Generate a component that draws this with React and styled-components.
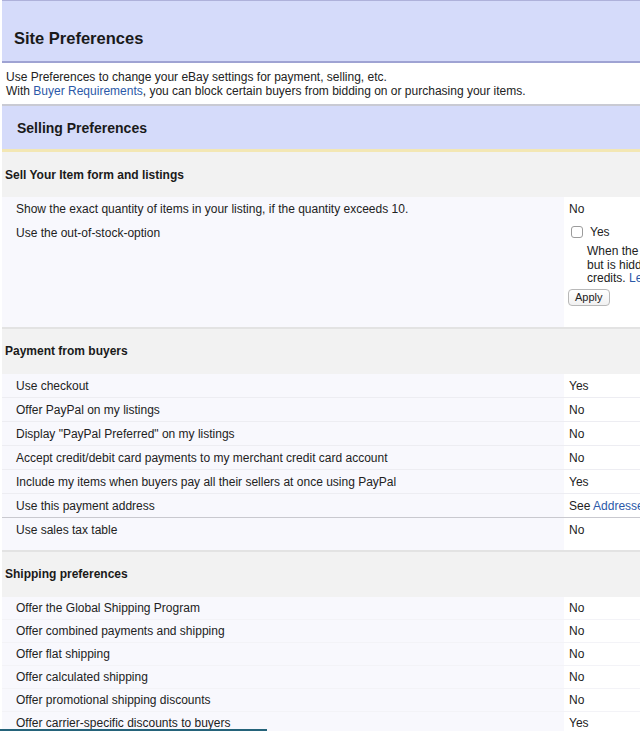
import React from 'react';
import styled, { createGlobalStyle } from 'styled-components';

const GlobalStyle = createGlobalStyle`
  html, body { margin: 0; padding: 0; background: #fff; overflow: hidden; }
  body {
    font-family: "Liberation Sans", Arial, Helvetica, sans-serif;
    color: #222;
    -webkit-font-smoothing: antialiased;
  }
`;

const Page = styled.div`
  width: 900px;
  margin-left: 2px;
`;

const SiteHeader = styled.header`
  background: #d5dbfa;
  border-top: 1px solid #aeb1da;
  border-bottom: 2px solid #9fa3d3;
  padding: 28px 12px 13px;
`;

const Title = styled.h1`
  margin: 0;
  font-size: 16.5px;
  line-height: 19px;
  font-weight: bold;
  color: #1a1a1a;
`;

const Intro = styled.div`
  padding: 7px 4px 6px;
  font-size: 12px;
  line-height: 14px;
  color: #222;
`;

const Link = styled.a`
  color: #2b59a8;
  text-decoration: none;
`;

const SellingBar = styled.div`
  height: 43px;
  display: flex;
  align-items: center;
  padding: 0 15px;
  background: #d5dbfa;
  border-top: 2px solid #c9cad3;
  border-bottom: 3px solid #f3e7b4;
  font-size: 14px;
  font-weight: bold;
  color: #1a1a1a;
`;

const Section = styled.section`
  border-bottom: ${(p) => (p.$last ? 'none' : '2px solid #e3e3e3')};
`;

const SectionHead = styled.div`
  height: 45px;
  display: flex;
  align-items: center;
  padding-left: 3px;
  background: #f2f2f2;
  font-size: 12px;
  font-weight: bold;
  color: #1a1a1a;
`;

const lineColor = {
  strong: '1px solid #c9c9cf',
  faint: '1px solid #ededf2',
  soft: '1px solid #f3f3f7',
  none: 'none',
};

const Row = styled.div`
  display: grid;
  grid-template-columns: 562px 1fr;
  font-size: 12px;
  line-height: 14px;
  border-bottom: ${(p) => lineColor[p.$line] || 'none'};
`;

const Label = styled.div`
  background: #f8f8fd;
  padding: ${(p) => p.$pt}px 0 ${(p) => p.$pb}px 14px;
  color: #222;
`;

const Value = styled.div`
  background: #fff;
  padding: ${(p) => p.$pt}px 5px ${(p) => p.$pb}px;
  color: #222;
  white-space: nowrap;
  overflow: hidden;
`;

const CheckLine = styled.label`
  display: flex;
  align-items: center;
  gap: 7px;
  height: 14px;
`;

const Box = styled.span`
  display: inline-block;
  width: 10px;
  height: 10px;
  margin-left: 2px;
  border: 1px solid #9c9c9c;
  border-radius: 3px;
  background: #fff;
`;

const Help = styled.div`
  margin: 6px 0 0 18px;
  line-height: 13.5px;
`;

const ApplyButton = styled.button`
  display: block;
  margin: 3px 0 0 -1px;
  height: 17px;
  padding: 0 6px;
  font-family: "Liberation Sans", Arial, sans-serif;
  font-size: 11px;
  line-height: 15px;
  color: #222;
  background: linear-gradient(#ffffff, #f1f1f1);
  border: 1px solid #b8b8b8;
  border-radius: 4px;
`;

const ScrollThumb = styled.div`
  position: fixed;
  left: 0;
  bottom: 0;
  width: 267px;
  height: 2px;
  background: #24637a;
`;

const payment = [
  ['Use checkout', 'Yes'],
  ['Offer PayPal on my listings', 'No'],
  ['Display "PayPal Preferred" on my listings', 'No'],
  ['Accept credit/debit card payments to my merchant credit card account', 'No'],
  ['Include my items when buyers pay all their sellers at once using PayPal', 'Yes'],
  ['Use this payment address', 'address'],
  ['Use sales tax table', 'No'],
];

const shipping = [
  ['Offer the Global Shipping Program', 'No'],
  ['Offer combined payments and shipping', 'No'],
  ['Offer flat shipping', 'No'],
  ['Offer calculated shipping', 'No'],
  ['Offer promotional shipping discounts', 'No'],
  ['Offer carrier-specific discounts to buyers', 'Yes'],
];

export default function App() {
  return (
    <>
      <GlobalStyle />
      <Page>
        <SiteHeader>
          <Title>Site Preferences</Title>
        </SiteHeader>
        <Intro>
          Use Preferences to change your eBay settings for payment, selling, etc.
          <br />
          With <Link href="#">Buyer Requirements</Link>, you can block certain buyers from bidding on or purchasing your items.
        </Intro>
        <SellingBar>Selling Preferences</SellingBar>

        <Section>
          <SectionHead>Sell Your Item form and listings</SectionHead>
          <Row $line="none">
            <Label $pt={5} $pb={5}>Show the exact quantity of items in your listing, if the quantity exceeds 10.</Label>
            <Value $pt={5} $pb={5}>No</Value>
          </Row>
          <Row $line="none">
            <Label $pt={5} $pb={21}>Use the out-of-stock-option</Label>
            <Value $pt={4} $pb={21}>
              <CheckLine>
                <Box />
                Yes
              </CheckLine>
              <Help>
                When the quantity of your item is zero, the listing remains active
                <br />
                but is hidden from search results until you update the quantity, saving listing
                <br />
                credits. <Link href="#">Learn more</Link>
              </Help>
              <ApplyButton type="button">Apply</ApplyButton>
            </Value>
          </Row>
        </Section>

        <Section>
          <SectionHead>Payment from buyers</SectionHead>
          {payment.map(([label, value], i) => {
            const last = i === payment.length - 1;
            return (
              <Row key={label} $line={last ? 'none' : i === payment.length - 2 ? 'strong' : 'faint'}>
                <Label $pt={5} $pb={last ? 13 : 4}>{label}</Label>
                <Value $pt={5} $pb={last ? 13 : 4}>
                  {value === 'address' ? (
                    <>
                      See <Link href="#">Addresses</Link>
                    </>
                  ) : (
                    value
                  )}
                </Value>
              </Row>
            );
          })}
        </Section>

        <Section $last>
          <SectionHead>Shipping preferences</SectionHead>
          {shipping.map(([label, value]) => (
            <Row key={label} $line="soft">
              <Label $pt={4} $pb={4}>{label}</Label>
              <Value $pt={4} $pb={4}>{value}</Value>
            </Row>
          ))}
        </Section>
      </Page>
      <ScrollThumb />
    </>
  );
}
